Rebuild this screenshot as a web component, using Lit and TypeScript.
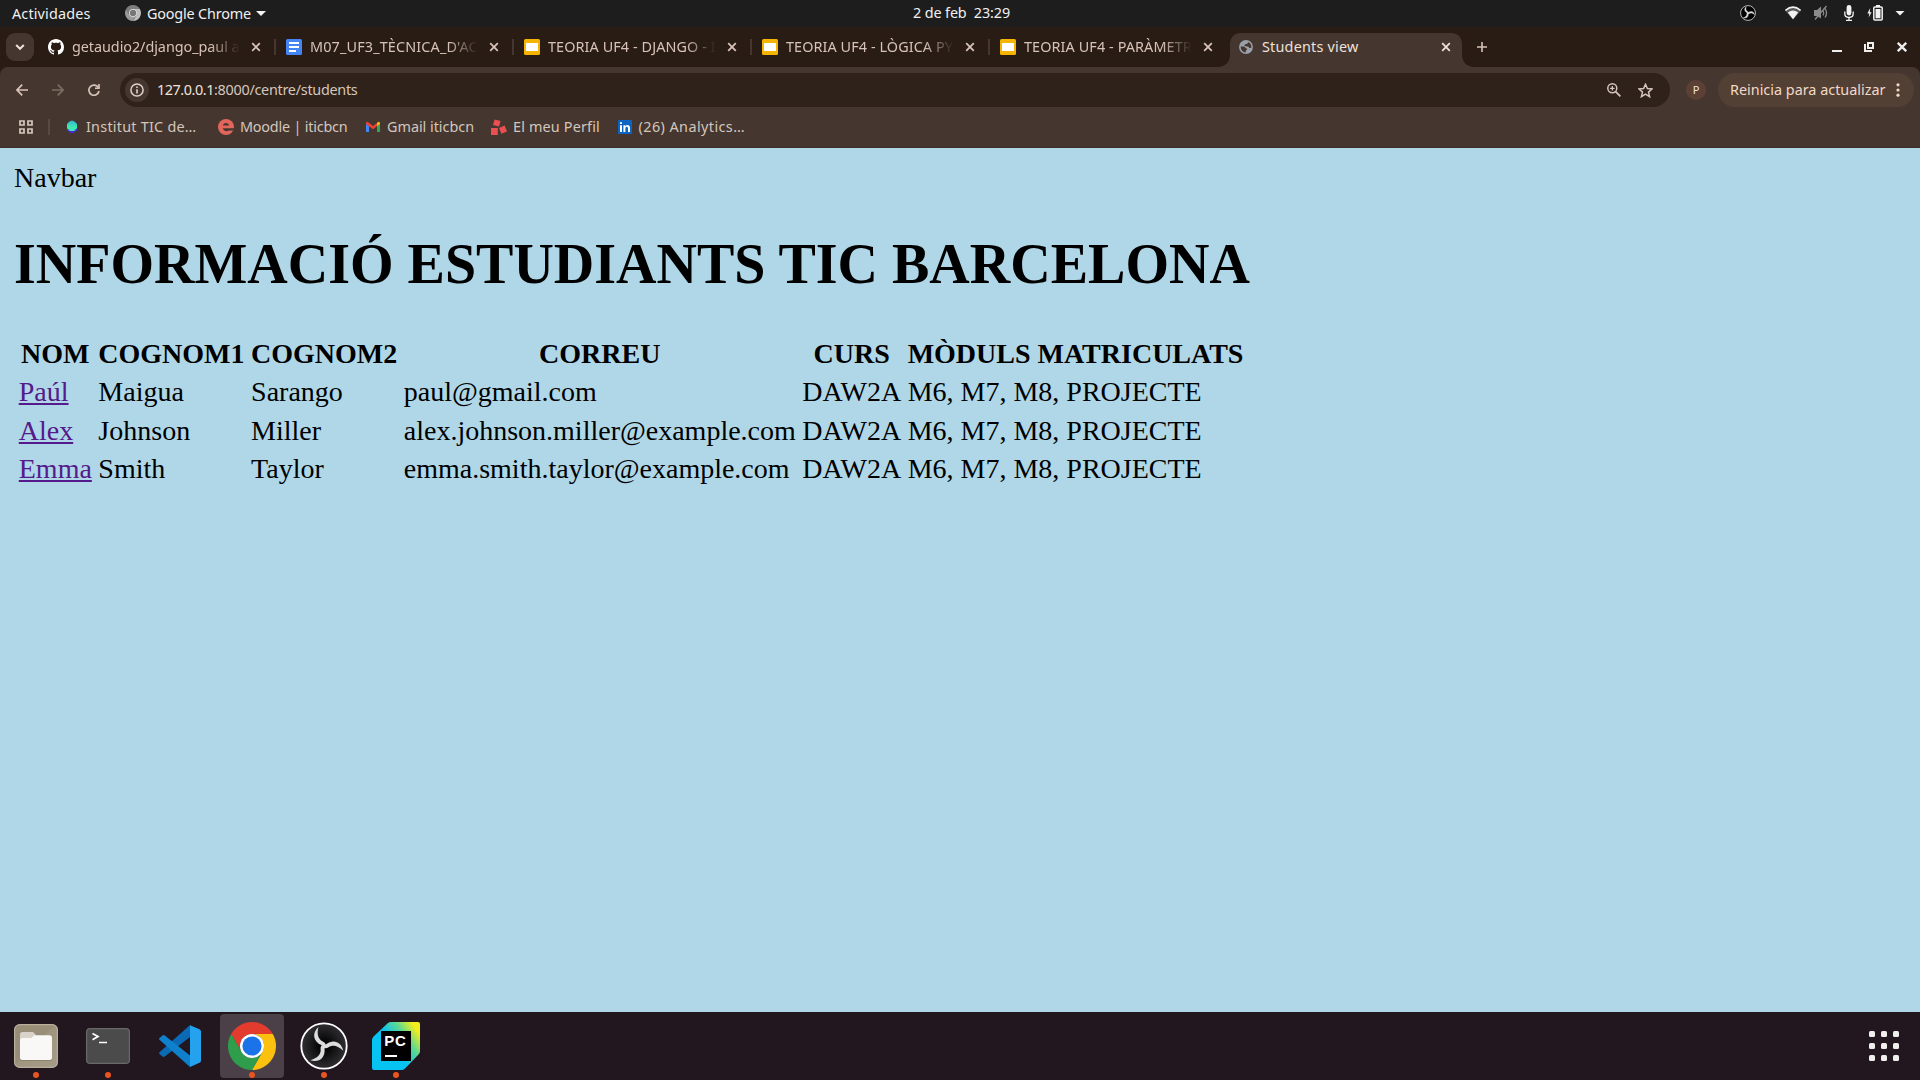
import { LitElement, html, css, svg } from "lit";
import { customElement, property } from "lit/decorators.js";

/** Single line of text whose letter spacing is tuned to fill a given width. */
@customElement("fit-text")
class FitText extends LitElement {
  @property({ type: Number }) w = 0;
  @property() text = "";
  static styles = css`
    :host { display: block; flex: none; white-space: pre; }
    .t { display: inline-block; }
  `;
  render() {
    return html`<span class="t">${this.text}</span>`;
  }
  updated() {
    const el = this.renderRoot.querySelector(".t") as HTMLElement;
    el.style.letterSpacing = "0px";
    const natural = el.getBoundingClientRect().width;
    el.style.letterSpacing = `${(this.w - natural) / this.text.length}px`;
  }
}

const chromeLogo = (size: number, c: string[]) => html`
  <svg width=${size} height=${size} viewBox="0 0 48 48">
    <path fill=${c[0]} d="M3.22 12A24 24 0 0 1 44.78 12L24 12A12 12 0 0 0 13.6 30Z" />
    <path fill=${c[1]} d="M44.78 12A24 24 0 0 1 24 48L34.39 30A12 12 0 0 0 24 12Z" />
    <path fill=${c[2]} d="M3.22 12A24 24 0 0 0 24 48L34.39 30A12 12 0 0 1 13.6 30Z" />
    <circle cx="24" cy="24" r="12" fill=${c[3]} />
    <circle cx="24" cy="24" r="9.6" fill=${c[4]} />
  </svg>`;

const blade = "M18.5 5C12 10.500 12.500 19.500 21.800 23.300L24 25.500L26 23.800C25.600 21.300 24.600 20.200 22.800 19.400C17.800 17.300 16.700 11 18.5 5Z";
const obsLogo = (id: string, size: number, ring: string, w: number, edge: string) => html`
  <svg width=${size} height=${size} viewBox="0 0 48 48">
    <defs>
      <radialGradient id=${id}><stop offset=".1" stop-color="#000" /><stop offset="1" stop-color=${edge} /></radialGradient>
    </defs>
    <circle cx="24" cy="24" r=${24 - w / 2 - 0.4} fill="url(#${id})" stroke=${ring} stroke-width=${w} />
    ${[0, 120, 240].map((a) => svg`<path d=${blade} fill="#dcdcdc" stroke="#dcdcdc" stroke-width=${size < 20 ? 1.2 : 0} transform="rotate(${a} 24 24)" />`)}
  </svg>`;

const closeIcon = html`<svg class="x" width="10" height="10" viewBox="0 0 10 10">
  <path d="M1.2 1.2L8.8 8.8M8.800 1.2L1.2 8.8" stroke="currentColor" stroke-width="1.8" />
</svg>`;

const github = html`<svg width="16" height="16" viewBox="0 0 16 16"><path fill="#fff" d="M8 0C3.58 0 0 3.58 0 8c0 3.54 2.29 6.53 5.47 7.59.4.07.55-.17.55-.38 0-.19-.01-.82-.01-1.49-2.01.37-2.53-.49-2.69-.94-.09-.23-.48-.94-.82-1.13-.28-.15-.68-.52-.01-.53.63-.01 1.08.58 1.23.82.72 1.21 1.87.87 2.33.66.07-.52.28-.87.51-1.07-1.78-.2-3.64-.89-3.64-3.95 0-.87.31-1.59.82-2.15-.08-.2-.36-1.02.08-2.12 0 0 .67-.21 2.2.82.64-.18 1.32-.27 2-.27s1.36.09 2 .27c1.53-1.04 2.2-.82 2.2-.82.44 1.1.16 1.92.08 2.12.51.56.82 1.27.82 2.15 0 3.07-1.87 3.75-3.65 3.95.29.25.54.73.54 1.48 0 1.07-.01 1.93-.01 2.2 0 .21.15.46.55.38A8.01 8.01 0 0 0 16 8c0-4.42-3.58-8-8-8z" /></svg>`;
const docs = html`<svg width="16" height="16" viewBox="0 0 16 16"><rect width="16" height="16" rx="1.5" fill="#4484f4" /><path fill="#fff" d="M3 3h10v2H3zM3 7h10v2H3zM3 11h7v2H3z" /></svg>`;
const slides = html`<svg width="16" height="16" viewBox="0 0 16 16"><rect width="16" height="16" rx="1.5" fill="#f4b400" /><path fill="#fff" d="M2 4h12v8H2z" /></svg>`;
const globe = html`<svg width="16" height="16" viewBox="0 0 24 24"><path fill="#9aa0a9" d="M12 1.600a10.400 10.400 0 1 0 0 20.800a10.400 10.400 0 0 0 0-20.800zM4 12v-.6H8.500C11 11.600 10.600 14 12.400 14.200C15 14.400 14 16.400 12 16.800L11.500 20.200A8.200 8.200 0 0 1 4 12zM19.800 13.600H17.600C16.400 13.400 16.200 11.400 14.800 11.200L11 10.800C9.400 10.400 9.600 8.400 11 8L13.600 7.200C14.800 6.600 15 5.400 15 4.400A8.200 8.200 0 0 1 19.800 13.600z" /></svg>`;

const tabs = [
  { icon: github, text: "getaudio2/django_paul a", w: 167.5 },
  { icon: docs, text: "M07_UF3_TÈCNICA_D'AC", w: 167.8 },
  { icon: slides, text: "TEORIA UF4 - DJANGO - I", w: 167.8 },
  { icon: slides, text: "TEORIA UF4 - LÒGICA PY", w: 167 },
  { icon: slides, text: "TEORIA UF4 - PARÀMETR", w: 167.8 },
  { icon: globe, text: "Students view", w: 96.5, active: true },
];

const hexIcon = html`<svg width="16" height="16" viewBox="0 0 16 16"><defs><linearGradient id="hx" x2="0" y2="1"><stop offset="0" stop-color="#35b5d8" /><stop offset=".6" stop-color="#3fe8b0" /></linearGradient></defs><path fill="#4a2be0" d="M3 9h10v2.600L8 14.600L3 11.600z" /><path fill="url(#hx)" d="M8 1.600L10.500 2.600L13 5V9.200L10 12H6L3 9.200V5L5.500 2.600z" /></svg>`;
const moodle = html`<svg width="16" height="16" viewBox="0 0 16 16"><circle cx="8" cy="8" r="8" fill="#e2665b" /><path fill="#45372f" d="M4.800 6.600C5.400 3.200 10.600 3.200 11.200 6.600zM4.800 9.200H16V10.400L14.800 11.600H10.800C9.400 12.800 5.400 12.400 4.800 9.200z" /></svg>`;
const gmail = html`<svg width="16" height="16" viewBox="0 0 16 16"><path fill="#4285f4" d="M1 4.4V13h3V7z" /><path fill="#34a853" d="M15 4.4V13h-3V7z" /><path fill="#ea4335" d="M1 3.6L2.6 2.8L8 7L13 3.2L12 7L8 10.2L1 5z" /><path fill="#fbbc04" d="M15 5L12 7.3V4L13.6 2.8L15 3.4z" /></svg>`;
const perfil = html`<svg width="16" height="16" viewBox="0 0 16 16"><g fill="#ea4f51"><path d="M3.6.4L9.6 2L8 7.6L2 6z" /><path d="M0 9h6.8v7H0z" /><path d="M8 9L13.6 6.6L16 12.4L10.4 14.8z" /></g></svg>`;
const linkedin = html`<svg width="16" height="16" viewBox="0 0 16 16"><rect x="1" y="1" width="14" height="14" rx="1" fill="#0b63c4" /><path fill="#fff" d="M3 6.2h2V13H3zM3 3.2h2v1.9H3zM6.4 6.2h1.9v1C9.6 5.4 13 5.6 13 8.8V13h-2V9.4C11 7.2 8.4 7.2 8.4 9.4V13h-2z" /></svg>`;

const bookmarks = [
  { cls: "b0", icon: hexIcon, text: "Institut TIC de…", w: 110.5 },
  { cls: "b1", icon: moodle, text: "Moodle | iticbcn", w: 107.5 },
  { cls: "b2", icon: gmail, text: "Gmail iticbcn", w: 87 },
  { cls: "b3", icon: perfil, text: "El meu Perfil", w: 87 },
  { cls: "b4", icon: linkedin, text: "(26) Analytics…", w: 106.5 },
];

const students = [
  ["Paúl", "Maigua", "Sarango", "paul@gmail.com", "DAW2A", "M6, M7, M8, PROJECTE"],
  ["Alex", "Johnson", "Miller", "alex.johnson.miller@example.com", "DAW2A", "M6, M7, M8, PROJECTE"],
  ["Emma", "Smith", "Taylor", "emma.smith.taylor@example.com", "DAW2A", "M6, M7, M8, PROJECTE"],
];

const files = html`<svg width="44" height="44" viewBox="0 0 44 44"><defs><linearGradient id="fb" x2="1" y2="1"><stop offset=".45" stop-color="#988d76" /><stop offset=".5" stop-color="#a0967f" /><stop offset="1" stop-color="#a59c89" /></linearGradient></defs>
  <rect x=".6" y=".6" width="42.8" height="42.8" rx="5" fill="url(#fb)" stroke="#b7ae9c" stroke-width="1.2" />
  <path fill="#d9d3c9" d="M6 18V10.5a2.500 2.500 0 0 1 2.500-2.500H18a3 3 0 0 1 2.400 1.200L22 11.500V18z" />
  <path fill="#7d735f" opacity=".6" d="M6 33h32v1.500a2.500 2.500 0 0 1-2.500 2.500h-27A2.500 2.500 0 0 1 6 34.500z" />
  <path fill="#f9f8f7" d="M6 16.500a2.500 2.500 0 0 1 2.500-2.500H17c1.500 0 2-2.800 4-2.800H35.500A2.500 2.500 0 0 1 38 13.700V33.500a2.500 2.500 0 0 1-2.500 2.500h-27A2.500 2.500 0 0 1 6 33.500z" /></svg>`;
const terminal = html`<svg width="44" height="36" viewBox="0 0 44 36"><rect x=".6" y=".6" width="42.800" height="34.800" rx="3.500" fill="#4b4b4b" stroke="#696969" stroke-width="1.200" /><path d="M6.500 5.500L12 8.500L6.500 11.800" fill="none" stroke="#fff" stroke-width="1.700" /><path d="M13 14.500h8" stroke="#fff" stroke-width="1.500" /></svg>`;
const vscode = html`<svg width="42" height="42" viewBox="0 0 42 42"><path fill="#0a6ab5" d="M.5 29L3.500 31.500a2 2 0 0 0 2.300.1L31 12V0L.5 27.200a1.300 1.300 0 0 0 0 1.800z" /><path fill="#0f80cc" d="M.5 13L3.500 10.400a2 2 0 0 1 2.300 0L31 30.500V42L.5 14.800a1.300 1.300 0 0 1 0-1.800z" /><path fill="#24a2ee" d="M31 .2L40.500 4.200a2.500 2.500 0 0 1 1.500 2.300V35.500a2.500 2.500 0 0 1-1.500 2.300L31 42z" /></svg>`;
const pycharm = html`<svg width="48" height="48" viewBox="0 0 48 48"><defs><linearGradient id="pc" x1="0.2" y1=".62" x2=".95" y2=".1"><stop offset=".3" stop-color="#07c3f2" /><stop offset=".65" stop-color="#5fd98f" /><stop offset=".95" stop-color="#f3ee1b" /></linearGradient></defs>
  <path fill="url(#pc)" d="M0 18Q0 16 1.500 14.500L16 1Q17 0 19 0H46Q48 0 48 2V29Q48 31 46.500 32.500L33 46.500Q31.500 48 29.500 48H2Q0 48 0 46z" /><path d="M9 9h30v30H9z" /><path fill="#fff" d="M13 33h12v2H13z" />
  <text x="12.300" y="24" fill="#fff" font-family="Liberation Sans" font-weight="700" font-size="15" textLength="21.500">PC</text></svg>`;

@customElement("app-root")
class AppRoot extends LitElement {
  static styles = css`
    :host { display: block; }
    * { box-sizing: border-box; }
    svg { display: block; flex: none; }
    .screen { width: 1920px; height: 1080px; display: flex; flex-direction: column; overflow: hidden;
      font: 14.400px/20px "Noto Sans", "Open Sans", sans-serif; }
    .row { display: flex; align-items: center; }

    .topbar { height: 27px; background: #1d1d1d; color: #f0f0f0; padding-left: 12px; flex: none; }
    .topbar fit-text { margin-top: 0; }
    .topbar .date { margin-top: -1px; }
    .chrome-mini { margin: -1px 6px 0 34.500px; }
    .caret { width: 10px; height: 5px; background: #f2f2f2; clip-path: polygon(0 0, 100% 0, 50% 100%); }
    .app-caret { margin-left: 5px; }
    .date { margin-left: 647px; }
    .tray { margin-left: auto; padding-right: 15px; height: 27px; padding-bottom: 1px; }
    .wifi { margin-left: 29px; }
    .vol { margin-left: 12px; }
    .mic { margin-left: 14.500px; }
    .bat { margin-left: 13.500px; }
    .tray .caret { margin-left: 12px; }

    .strip { height: 40px; background: #281c14; flex: none; color: #d8c2b7; }
    .search { width: 28px; height: 28px; border-radius: 9px; background: #45372f; margin: 0 4px 0 6px; display: grid; place-items: center; }
    .tab { position: relative; width: 238px; height: 40px; padding-left: 10px; flex: none; }
    .tab > * { position: relative; }
    .title { width: 168px; margin-left: 8px; overflow: hidden; }
    .tab.idle .title { mask-image: linear-gradient(90deg, #000 138px, transparent 168px); }
    .x { margin-left: 11px; }
    .tab::after { content: ""; position: absolute; right: 0; top: 12px; width: 2px; height: 16px; background: #45372f; }
    .tab.last::after { display: none; }
    .tab.active { color: #eee0da; }
    .tab.active::before { content: ""; position: absolute; left: 2px; top: 6px; width: 232px; height: 34px; border-radius: 10px 10px 0 0; background: #45372f; }
    .tab.active::after { left: -9px; right: auto; top: 29px; width: 254px; height: 11px;
      background: radial-gradient(circle at 0 0, transparent 10.500px, #45372f 11px) 0 0 / 11px 11px no-repeat,
        radial-gradient(circle at 100% 0, transparent 10.500px, #45372f 11px) 100% 0 / 11px 11px no-repeat; }
    .plus { margin-left: 11px; }
    .winbtns { margin-left: auto; margin-right: 13px; }
    .restore { margin: 0 23px 0 22px; }

    .chrome { height: 81px; background: #281c14; flex: none; }
    .panel { height: 81px; background: #45372f; border-radius: 8px 8px 0 0; padding-top: 6px; border-bottom: 1px solid #3b2e27; }
    .tools { height: 34px; padding: 0 6px 0 16px; color: #d8c2b7; }
    .fwd { margin-left: 24px; }
    .reload { margin-left: 24px; }
    .omni { width: 1550px; height: 34px; border-radius: 17px; background: #2f221b; margin-left: 20px; padding: 0 17px 0 5px; }
    .info { width: 24px; height: 24px; border-radius: 50%; background: #45372f; display: grid; place-items: center; margin-right: 8px; }
    .host { color: #efe2db; }
    .path { color: #d5c6bd; }
    .mag { margin-left: auto; margin-right: 17px; }
    .avatar { width: 20px; height: 20px; border-radius: 50%; background: #5c4035; color: #eee0da; text-align: center; font-size: 11px; line-height: 20px; margin-left: 16px; }
    .update { width: 196px; height: 34px; border-radius: 17px; background: #524034; color: #f2d8c8; margin-left: 12px; padding-left: 12px; }
    .dots { margin-left: 10.500px; }
    .marks { height: 40px; padding-left: 18px; color: #d5c6bd; }
    .vr { width: 2px; height: 16px; background: #5a4a40; margin-left: 14px; }
    .mark { flex: none; }
    .mark fit-text { margin-left: 6px; }
    .b0 { margin-left: 14px; }
    .b1 { margin-left: 21.500px; }
    .b2 { margin-left: 17.500px; }
    .b3 { margin-left: 17px; }
    .b4 { margin-left: 16.500px; }

    .page { height: 864px; flex: none; background: #afd7e7; padding: 14px; color: #000; font: 28px "Liberation Serif", serif; line-height: normal; overflow: hidden; }
    h1 { font-size: 56px; margin: 37.500px 0; }
    table { border-collapse: separate; border-spacing: 3.500px; }
    th, td { padding: 1.750px; }
    td { text-align: left; }
    .link { color: #551a8b; text-decoration: underline; }

    .dock { height: 68px; flex: none; background: #22161f; align-items: stretch; }
    .item { width: 64px; height: 64px; margin: 2px 4px 0; border-radius: 4px; display: grid; place-items: center; position: relative; flex: none; }
    .item.on { background: #4b4048; }
    .item.run::after { content: ""; position: absolute; left: 29px; top: 58px; width: 6px; height: 6px; border-radius: 50%; background: #e95420; }
    .grid { margin: 19px 21px 0 auto; display: grid; grid-template-columns: repeat(3, 6px); grid-auto-rows: 6px; gap: 6px; }
    .cell { background: #f0efed; border-radius: 1.500px; }
  `;

  render() {
    return html`<div class="screen">
      <div class="topbar row">
        <fit-text w="78.5" text="Actividades"></fit-text>
        <div class="chrome-mini">${chromeLogo(16, ["#7e7e7e", "#bdbdbd", "#9a9a9a", "#f0f0f0", "#777"])}</div>
        <fit-text w="104" text="Google Chrome"></fit-text>
        <div class="caret app-caret"></div>
        <fit-text class="date" w="97" text="2 de feb  23:29"></fit-text>
        <div class="tray row">
          ${obsLogo("obs-tray", 16, "#d0d0d0", 2.6, "#000")}
          <svg class="wifi" width="16" height="14" viewBox="0 0 16 14"><path d="M0 4.500Q8-2.500 16 4.500L8 13.500z" fill="#8a8a8a" opacity=".55" /><path d="M.4 4.400Q8-2 15.600 4.400" fill="none" stroke="#f2f2f2" stroke-width="1.600" /><path fill="#f2f2f2" d="M2.800 6.500Q8 2.600 13.200 6.500L8 13.200z" /></svg>
          <svg class="vol" width="16" height="16" viewBox="0 0 16 16"><path fill="#8b8b8b" d="M1 5h3l4-3.500v12L4 11H1z" /><path d="M10 5.500Q11.500 8 10 10.500M12 3.500Q15 8 12 12.500M13.500 1L2 14.500" fill="none" stroke="#8b8b8b" stroke-width="1.300" /></svg>
          <svg class="mic" width="10" height="16" viewBox="0 0 10 16"><rect x="2.600" y="0" width="4.800" height="10.500" rx="2.400" fill="#f2f2f2" /><path d="M.8 6.500V8.500C.8 13.800 9.200 13.800 9.200 8.500V6.500M5 12.500V15.200M2 15.300H8" fill="none" stroke="#f2f2f2" stroke-width="1.300" /></svg>
          <svg class="bat" width="16" height="16" viewBox="0 0 16 16"><path fill="#f2f2f2" d="M3.200 3L.4 8.500H2.300L1.700 12.500L4.600 7.200H2.800z" /><rect x="6.800" y="2" width="8.400" height="13" rx="1" fill="none" stroke="#f2f2f2" stroke-width="1.500" /><path fill="#f2f2f2" d="M9 0h4v2H9zM8.500 4h5v9.300h-5z" /></svg>
          <div class="caret"></div>
        </div>
      </div>

      <div class="strip row">
        <div class="search"><svg width="10" height="8" viewBox="0 0 10 8"><path d="M1.200 2L5 5.800L8.800 2" fill="none" stroke="#eee0da" stroke-width="2" /></svg></div>
        ${tabs.map((t, i) => html`<div class="tab row ${t.active ? "active" : "idle"} ${i === 4 ? "last" : ""}">
          ${t.icon}<div class="title"><fit-text w=${t.w} text=${t.text}></fit-text></div>${closeIcon}
        </div>`)}
        <svg class="plus" width="10" height="10" viewBox="0 0 10 10"><path d="M5 0V10M0 5H10" stroke="#d8c2b7" stroke-width="1.600" /></svg>
        <div class="winbtns row">
          <svg width="10" height="10" viewBox="0 0 10 10"><path d="M0 8h10v2H0z" fill="#eee" /></svg>
          <svg class="restore" width="10" height="10" viewBox="0 0 10 10"><path d="M4 1H9V6H4z" fill="none" stroke="#eee" stroke-width="2" /><path d="M0 2H2V8H8V10H0z" fill="#eee" /></svg>
          <svg width="10" height="10" viewBox="0 0 10 10"><path d="M.8.8L9.200 9.200M9.200.8L.8 9.200" stroke="#eee" stroke-width="2.300" /></svg>
        </div>
      </div>

      <div class="chrome"><div class="panel">
        <div class="tools row">
          <svg width="12" height="12" viewBox="0 0 12 12"><path d="M12 6H1.200M6.200.7L1 6L6.200 11.300" fill="none" stroke="#d8c2b7" stroke-width="1.700" /></svg>
          <svg class="fwd" width="12" height="12" viewBox="0 0 12 12"><path d="M0 6H10.800M5.800.7L11 6L5.800 11.300" fill="none" stroke="#7d6c62" stroke-width="1.700" /></svg>
          <svg class="reload" width="12" height="12" viewBox="0 0 12 12"><path d="M10.500 3.800A5.100 5.100 0 1 0 11 7" fill="none" stroke="#d8c2b7" stroke-width="1.700" /><path d="M11.800 0V5H7V3.500H10.200V0z" fill="#d8c2b7" /></svg>
          <div class="omni row">
            <div class="info"><svg width="14" height="14" viewBox="0 0 14 14"><circle cx="7" cy="7" r="6.100" fill="none" stroke="#e0d2ca" stroke-width="1.500" /><path d="M6.200 6.200h1.600v4.200H6.200zM6.200 3.600h1.600v1.500H6.200z" fill="#e0d2ca" /></svg></div>
            <fit-text class="host" w="57" text="127.0.0.1"></fit-text>
            <fit-text class="path" w="143.5" text=":8000/centre/students"></fit-text>
            <svg class="mag" width="14" height="14" viewBox="0 0 14 14"><circle cx="5.300" cy="5.300" r="4.500" fill="none" stroke="#d5c6bd" stroke-width="1.500" /><path d="M8.600 8.600L13.400 13.400" stroke="#d5c6bd" stroke-width="1.700" /><path d="M5.300 3V7.600M3 5.300H7.600" stroke="#d5c6bd" stroke-width="1.300" /></svg>
            <svg width="15" height="15" viewBox="0 0 15 15"><path d="M7.500 1.300L9.400 5.600L14 6L10.500 9.100L11.600 13.700L7.500 11.200L3.400 13.700L4.500 9.100L1 6L5.600 5.600z" fill="none" stroke="#d5c6bd" stroke-width="1.500" /></svg>
          </div>
          <div class="avatar">P</div>
          <div class="update row">
            <fit-text w="155.5" text="Reinicia para actualizar"></fit-text>
            <svg class="dots" width="4" height="14" viewBox="0 0 4 14"><g fill="#f2d8c8"><circle cx="2" cy="1.800" r="1.600" /><circle cx="2" cy="7" r="1.600" /><circle cx="2" cy="12.200" r="1.600" /></g></svg>
          </div>
        </div>
        <div class="marks row">
          <svg width="16" height="16" viewBox="0 0 16 16"><path d="M2 2h4v4H2zM10 2h4v4H10zM2 10h4v4H2zM10 10h4v4H10z" fill="none" stroke="#d8c9c0" stroke-width="1.700" /></svg>
          <div class="vr"></div>
          ${bookmarks.map((b) => html`<div class="mark row ${b.cls}">${b.icon}<fit-text w=${b.w} text=${b.text}></fit-text></div>`)}
        </div>
      </div></div>

      <div class="page">
        <div>Navbar</div>
        <h1>INFORMACIÓ ESTUDIANTS TIC BARCELONA</h1>
        <table>
          <tr>${["NOM", "COGNOM1", "COGNOM2", "CORREU", "CURS", "MÒDULS MATRICULATS"].map((h) => html`<th>${h}</th>`)}</tr>
          ${students.map((s) => html`<tr>${s.map((c, i) => html`<td>${i === 0 ? html`<a class="link">${c}</a>` : c}</td>`)}</tr>`)}
        </table>
      </div>

      <div class="dock row">
        <div class="item run">${files}</div>
        <div class="item run">${terminal}</div>
        <div class="item">${vscode}</div>
        <div class="item run on">${chromeLogo(48, ["#e33b2e", "#fcc00f", "#2f9e4c", "#fff", "#1a73e8"])}</div>
        <div class="item run">${obsLogo("obs-dock", 48, "#fff", 1.8, "#302e31")}</div>
        <div class="item run">${pycharm}</div>
        <div class="grid">${Array.from({ length: 9 }, () => html`<div class="cell"></div>`)}</div>
      </div>
    </div>`;
  }
}
